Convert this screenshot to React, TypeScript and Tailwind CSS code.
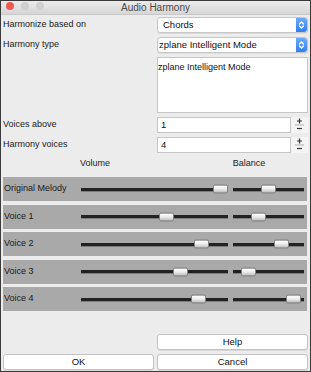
import React from "react";

const voices = [
  { name: "Original Melody", vol: 139, bal: 35 },
  { name: "Voice 1", vol: 85, bal: 25 },
  { name: "Voice 2", vol: 120, bal: 48 },
  { name: "Voice 3", vol: 99, bal: 15 },
  { name: "Voice 4", vol: 117, bal: 60 },
];

const Chevrons = () => (
  <svg width="7" height="10" viewBox="0 0 7 10" fill="none" stroke="white" strokeWidth="1.3" strokeLinecap="round" strokeLinejoin="round">
    <path d="M1.5 4 L3.5 2 L5.5 4" />
    <path d="M1.5 6 L3.5 8 L5.5 6" />
  </svg>
);

const Select = ({ value, pad }: { value: string; pad: string }) => (
  <div className="flex h-[16px] items-center rounded-[3px] border border-[#c6c6c6] bg-white shadow-[0_1px_0_rgba(0,0,0,0.06)]">
    <span className={`flex-1 text-[9.5px] text-[#111] ${pad}`}>{value}</span>
    <div className="flex h-full w-[11px] items-center justify-center rounded-r-[3px] bg-linear-to-b from-[#6aa9f9] to-[#2f7ff0]">
      <Chevrons />
    </div>
  </div>
);

// +/- stepper drawn as small strokes
const Stepper = () => (
  <svg width="17" height="16" viewBox="0 0 17 16" fill="none" stroke="#333" strokeWidth="1.2">
    <path d="M8.5 1.5 V6.5 M6 4 H11" />
    <path d="M4 8 H13" stroke="#b0b0b0" strokeWidth="1" />
    <path d="M6 11.5 H11" />
  </svg>
);

const Spin = ({ value }: { value: string }) => (
  <div className="flex h-[16px]">
    <div className="flex flex-1 items-center border border-[#c6c6c6] bg-white pl-[3px] text-[9.5px] text-[#111]">{value}</div>
    <div className="flex w-[17px] items-center justify-center bg-[#f4f4f4]">
      <Stepper />
    </div>
  </div>
);

const Slider = ({ width, at }: { width: number; at: number }) => (
  <div className="relative h-[3px] shrink-0 bg-[#222] shadow-[0_1px_0_#7c7c7c]" style={{ width }}>
    <div
      className="absolute top-1/2 h-[9px] w-[15px] -translate-y-1/2 rounded-[2px] border border-[#808080] bg-linear-to-b from-white via-[#ececec] to-[#bdbdbd]"
      style={{ left: at - 7.5 }}
    />
  </div>
);

const Button = ({ label }: { label: string }) => (
  <div className="flex h-[16px] items-center justify-center rounded-[3px] border border-[#c2c2c2] bg-white text-[9.5px] text-[#111] shadow-[0_1px_0_rgba(0,0,0,0.08)]">
    {label}
  </div>
);

const App = () => {
  return (
    <div className="flex h-[372px] w-[311px] flex-col border border-[#3a3a3a] bg-[#ececec] font-['Liberation_Sans',Arial,sans-serif] text-[9px] text-[#1a1a1a]">
      {/* title bar */}
      <div className="relative flex h-[14px] shrink-0 items-center justify-center border-b border-[#c9c9c9] bg-linear-to-b from-[#ebebeb] to-[#d6d6d6]">
        <div className="absolute left-[5px] top-[1px] flex gap-[7px]">
          <div className="h-[8px] w-[8px] rounded-full bg-[#ee5a52]" />
          <div className="h-[8px] w-[8px] rounded-full bg-[#cfcfcf]" />
          <div className="h-[8px] w-[8px] rounded-full bg-[#cfcfcf]" />
        </div>
        <span className="text-[10px] text-[#4a4a4a]">Audio Harmony</span>
      </div>

      {/* settings */}
      <div className="mt-[2px] grid grid-cols-[154px_151px] gap-y-[4px] pl-[2px]">
        <span className="self-center">Harmonize based on</span>
        <Select value="Chords" pad="pl-[5px]" />
        <span className="self-center">Harmony type</span>
        <Select value="zplane Intelligent Mode" pad="pl-[1px]" />
        <span />
        <div className="h-[56px] border border-[#c6c6c6] bg-white pt-[4px] text-[9px] leading-[10px] text-[#111]">zplane Intelligent Mode</div>
        <span className="self-center">Voices above</span>
        <Spin value="1" />
        <span className="self-center">Harmony voices</span>
        <Spin value="4" />
      </div>

      <div className="mt-[4px] flex h-[14px] items-center pl-[59px]">
        <span className="w-[70px] text-center">Volume</span>
        <span className="ml-[84px] w-[70px] text-center">Balance</span>
      </div>

      {/* voices */}
      <div className="mt-[6px] flex flex-col gap-[3.5px] px-[2px] pr-[3px]">
        {voices.map((v) => (
          <div key={v.name} className="flex h-[24px] items-center bg-[#a9a9a9]">
            <span className="w-[78px] shrink-0 pl-[1px]">{v.name}</span>
            <Slider width={147} at={v.vol} />
            <div className="w-[5px] shrink-0" />
            <Slider width={71} at={v.bal} />
          </div>
        ))}
      </div>

      <div className="flex-1" />

      <div className="grid grid-cols-[151px_151px] gap-x-[3px] gap-y-[4px] pb-[1px] pl-[2px]">
        <span />
        <Button label="Help" />
        <Button label="OK" />
        <Button label="Cancel" />
      </div>
    </div>
  );
};

export default App;
